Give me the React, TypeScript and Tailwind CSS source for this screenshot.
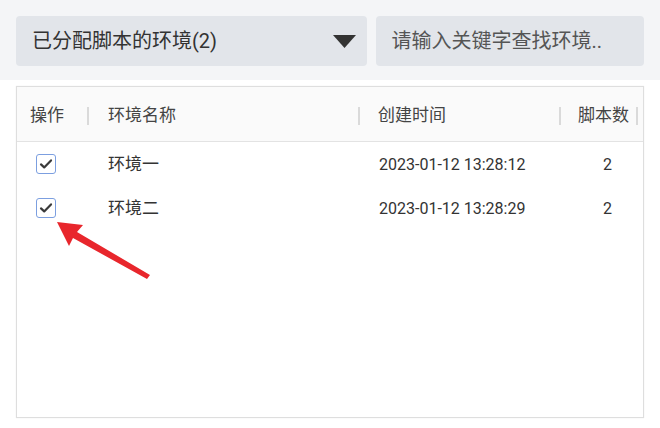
import React from "react";

const font = { fontFamily: 'Roboto, "Noto Sans CJK SC", sans-serif' };

function Check() {
  return (
    <div className="w-[20px] h-[20px] rounded-[3px] border-[1.5px] border-[#7c9fe0] bg-white flex items-center justify-center">
      <svg width="14" height="12" viewBox="0 0 14 12">
        <path d="M2 6.4 L5.2 9.4 L12 2.4" fill="none" stroke="#3a3a3a" strokeWidth="2.2" strokeLinecap="round" strokeLinejoin="round" />
      </svg>
    </div>
  );
}

const cols = "grid grid-cols-[70px_2px_269px_2px_199px_2px_75px_2px_1fr]";

function Sep() {
  return <div className="h-[18px] w-[2px] bg-[#dadada] self-center mt-[3px]" />;
}

const rows = [
  { name: "环境一", time: "2023-01-12 13:28:12", n: 2 },
  { name: "环境二", time: "2023-01-12 13:28:29", n: 2 },
];

export default function App() {
  return (
    <div className="w-[660px] h-[428px] bg-white relative overflow-hidden text-[#333]" style={font}>
      <div className="bg-[#f4f5f7] h-[80px] px-[16px] pt-[16px] flex gap-[9px]">
        <div className="w-[352px] h-[50px] rounded-[4px] bg-[#e2e5ea] flex items-center justify-between pl-[16px] pr-[11px]">
          <span className="text-[20px] text-[#333]">已分配脚本的环境(2)</span>
          <svg width="23" height="13" viewBox="0 0 23 13">
            <path d="M0 0 H23 L11.5 13 Z" fill="#333" />
          </svg>
        </div>
        <div className="w-[268px] h-[50px] rounded-[4px] bg-[#e2e5ea] flex items-center pl-[15px]">
          <span className="text-[20px] text-[#555]">请输入关键字查找环境..</span>
        </div>
      </div>
      <div className="mt-[6px] ml-[16px] w-[628px] h-[332px] border border-[#dedede] bg-white shadow-[0_0_1px_#e6e6e6]">
        <div className={`${cols} h-[55px] bg-[#fafafa] border-b border-[#e3e3e3] text-[17px] text-[#444]`}>
          <div className="pl-[13px] pt-[3px] flex items-center">操作</div>
          <Sep />
          <div className="pl-[19px] pt-[3px] flex items-center">环境名称</div>
          <Sep />
          <div className="pl-[18px] pt-[3px] flex items-center">创建时间</div>
          <Sep />
          <div className="pl-[17px] pt-[3px] flex items-center">脚本数</div>
          <Sep />
          <div />
        </div>
        {rows.map((r) => (
          <div key={r.name} className={`${cols} h-[44px] text-[17px] text-[#333]`}>
            <div className="pl-[19px] flex items-center">
              <Check />
            </div>
            <div />
            <div className="pl-[19px] pt-[1px] flex items-center">{r.name}</div>
            <div />
            <div className="pl-[19px] pt-[1px] flex items-center text-[16px]">{r.time}</div>
            <div />
            <div className="pl-[42px] pt-[1px] flex items-center text-[16px]">{r.n}</div>
            <div />
            <div />
          </div>
        ))}
      </div>
      <svg className="absolute left-0 top-0 pointer-events-none" width="660" height="428" viewBox="0 0 660 428">
        <path d="M57 222 L83 225 L77 232 L150 275 L147 279 L73 238 L69 246 Z" fill="#e8262c" />
      </svg>
    </div>
  );
}
